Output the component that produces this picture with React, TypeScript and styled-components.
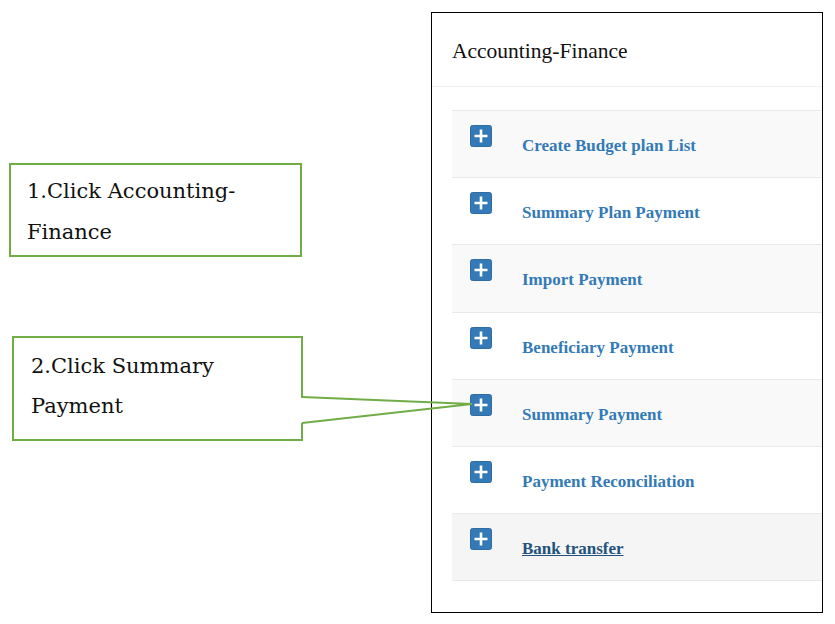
import { createGlobalStyle, styled } from "styled-components";

const GlobalStyle = createGlobalStyle`
  html, body {
    margin: 0;
    padding: 0;
    background: #fff;
  }
  body {
    font-family: "Liberation Serif", "Times New Roman", serif;
  }
`

const Page = styled.div`
  position: relative;
  display: flex;
  width: 835px;
  height: 624px;
  overflow: hidden;
`

const NoteColumn = styled.div`
  display: flex;
  flex-direction: column;
  width: 431px;
  padding-top: 163px;
  box-sizing: border-box;
`

const Callout = styled.div<CalloutProps>`
  box-sizing: border-box;
  width: ${(p) => p.w}px;
  height: ${(p) => p.h}px;
  margin-left: ${(p) => p.left}px;
  margin-top: ${(p) => p.top}px;
  padding: ${(p) => p.padTop}px 0 0 ${(p) => p.padLeft}px;
  border: 2px solid #70ad47;
  font-family: "DejaVu Serif", "Liberation Serif", serif;
  font-size: 21px;
  line-height: ${(p) => p.lh}px;
  color: #111;
  background: #fff;
`

const Panel = styled.div`
  box-sizing: border-box;
  width: 392px;
  height: 601px;
  margin-top: 12px;
  border: 1px solid #000;
  background: #fff;
  overflow: hidden;
`

const PanelHeader = styled.div`
  height: 74px;
  padding: 26px 20px 0 20px;
  box-sizing: border-box;
  border-bottom: 1px solid #f0f0f0;
  font-size: 21.5px;
  line-height: 24px;
  color: #111;
`

const PanelBody = styled.div`
  padding: 23px 0 0 20px;
`

const Row = styled.div<{ shade: string; last?: boolean; h: number }>`
  display: flex;
  align-items: flex-start;
  box-sizing: border-box;
  height: ${(p) => p.h}px;
  padding: 14px 0 0 18px;
  border-top: 1px solid #e9e9e9;
  border-bottom: ${(p) => (p.last ? "1px solid #e9e9e9" : "none")};
  background: ${(p) => p.shade};
`

const Label = styled.a<{ active?: boolean }>`
  margin: 11px 0 0 30px;
  font-weight: bold;
  font-size: 17px;
  line-height: 20px;
  white-space: nowrap;
  color: ${(p) => (p.active ? "#23527c" : "#337ab7")};
  text-decoration: ${(p) => (p.active ? "underline" : "none")};
`

const PlusIcon = () => (
  <svg width="22" height="22" viewBox="0 0 22 22" style={{ flex: "none" }}>
    <rect x="0.5" y="0.5" width="21" height="21" rx="2" fill="#337ab7" stroke="#2e6da4" />
    <path d="M11 4.5V17.5M4.5 11H17.5" stroke="#fff" strokeWidth="2.6" />
  </svg>
)

const Overlay = styled.svg`
  position: absolute;
  left: 0;
  top: 0;
  pointer-events: none;
`

const items = [
  { name: "Create Budget plan List", h: 67 },
  { name: "Summary Plan Payment", h: 67 },
  { name: "Import Payment", h: 68 },
  { name: "Beneficiary Payment", h: 67 },
  { name: "Summary Payment", h: 67 },
  { name: "Payment Reconciliation", h: 67 },
  { name: "Bank transfer", h: 68 },
]

const App = () => {
  return (
    <>
      <GlobalStyle />
      <Page>
        <NoteColumn>
          <Callout w={293} h={94} left={9} top={0} padTop={6} padLeft={16} lh={41}>
            1.Click Accounting-
            <br />
            Finance
          </Callout>
          <Callout w={291} h={105} left={12} top={79} padTop={8} padLeft={17} lh={40}>
            2.Click Summary
            <br />
            Payment
          </Callout>
        </NoteColumn>
        <Panel>
          <PanelHeader>Accounting-Finance</PanelHeader>
          <PanelBody>
            {items.map((item, i) => {
              const last = i === items.length - 1
              const shade = last ? "#f5f5f5" : i % 2 === 0 ? "#f9f9f9" : "#fff"
              return (
                <Row key={item.name} shade={shade} last={last} h={item.h}>
                  <PlusIcon />
                  <Label active={last}>{item.name}</Label>
                </Row>
              )
            })}
          </PanelBody>
        </Panel>
        <Overlay width="835" height="624">
          <line x1="302" y1="398" x2="302" y2="423" stroke="#fff" strokeWidth="3" />
          <polyline points="302,397 472,404 302,423" fill="none" stroke="#70ad47" strokeWidth="2" />
        </Overlay>
      </Page>
    </>
  )
}

export default App

type CalloutProps = {
  w: number
  h: number
  left: number
  top: number
  padTop: number
  padLeft: number
  lh: number
}
